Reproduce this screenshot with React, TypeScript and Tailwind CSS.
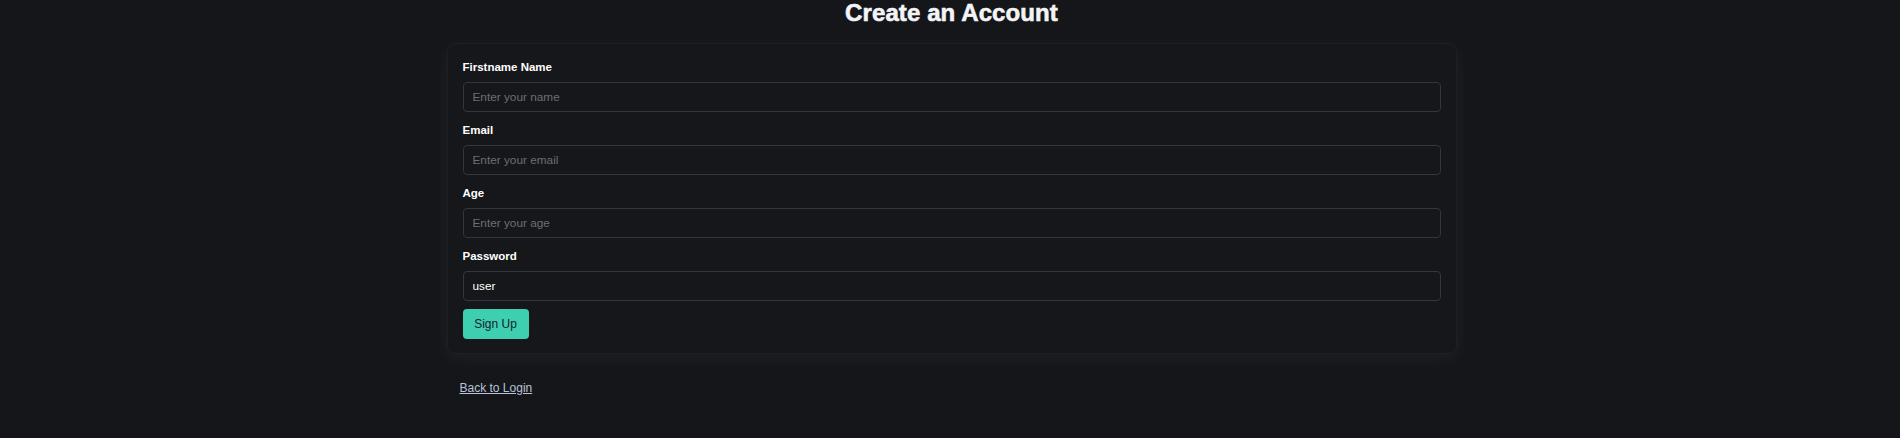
import { useState } from 'react'

const fields = [
  { id: 'name', label: 'Firstname Name', placeholder: 'Enter your name', type: 'text' },
  { id: 'email', label: 'Email', placeholder: 'Enter your email', type: 'email' },
  { id: 'age', label: 'Age', placeholder: 'Enter your age', type: 'text' },
  { id: 'password', label: 'Password', placeholder: 'Enter your password', type: 'text' },
]

export default function App() {
  const [values, setValues] = useState<Record<string, string>>({
    name: '',
    email: '',
    age: '',
    password: 'user',
  })

  return (
    <div className="h-[438px] overflow-hidden bg-[#15161a] pl-[3px] font-['Liberation_Sans',Arial,sans-serif] text-white">
      <h1 className="mb-[17px] text-center text-[24px] leading-[26px] font-black tracking-[0.1px] text-[#f4f4f7] [-webkit-text-stroke:0.6px_#f4f4f7]">
        Create an Account
      </h1>

      <div className="mx-auto w-[1010px]">
        <form
          className="flex flex-col gap-[10px] rounded-[8px] border border-[#1e1f24] bg-[#16171b] px-[15px] pt-[15px] pb-[14px] shadow-[0_4px_18px_rgba(255,255,255,0.05)]"
          onSubmit={(e) => e.preventDefault()}
        >
          {fields.map((field) => (
            <div key={field.id} className="flex flex-col gap-[7px]">
              <label
                className="text-[11.5px] leading-[16px] font-bold text-white"
                htmlFor={field.id}
              >
                {field.label}
              </label>
              <input
                className="h-[30px] w-full rounded-[4px] border border-[#34353d] bg-transparent px-[9px] text-[11.8px] text-white outline-none placeholder:text-[#6b6e78]"
                id={field.id}
                onChange={(e) => setValues((v) => ({ ...v, [field.id]: e.target.value }))}
                placeholder={field.placeholder}
                type={field.type}
                value={values[field.id]}
              />
            </div>
          ))}

          <div className="-mt-[2px]">
            <button
              className="h-[30px] w-[66px] rounded-[4px] bg-[#3ecfb1] text-[12px] text-[#14222b]"
              type="submit"
            >
              Sign Up
            </button>
          </div>
        </form>

        <div className="mt-[21px] pl-[13px]">
          <a className="text-[12px] leading-[16px] text-[#b9c3d8] underline" href="#">
            Back to Login
          </a>
        </div>
      </div>
    </div>
  )
}
